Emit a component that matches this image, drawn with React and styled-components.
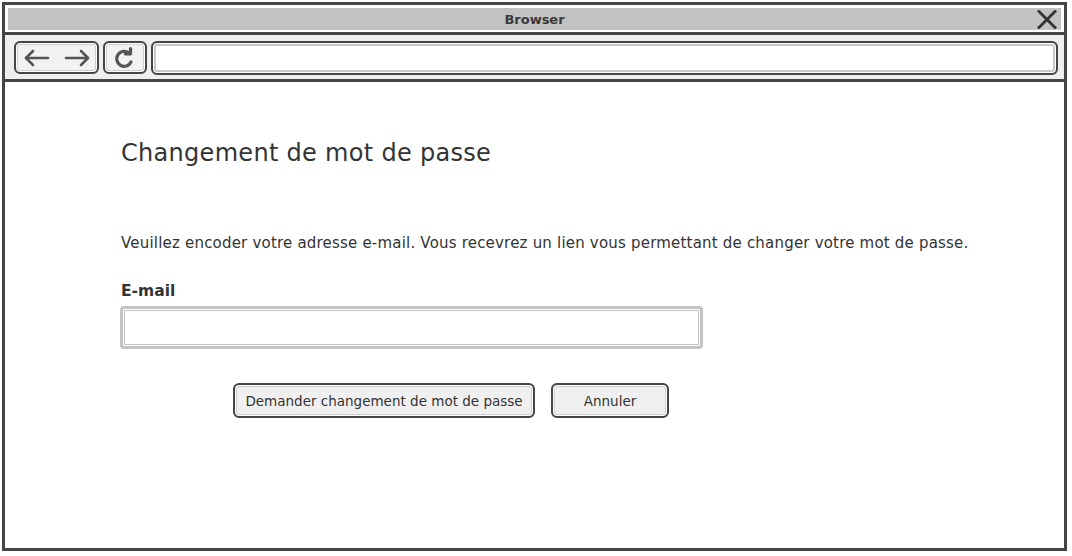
import styled, { createGlobalStyle } from "styled-components";

const GlobalStyle = createGlobalStyle`
  html, body {
    margin: 0;
    padding: 0;
    background: #ffffff;
  }
  * {
    box-sizing: border-box;
  }
`;

const FONT = `"Comic Sans MS", "DejaVu Sans", "Open Sans", sans-serif`;

const Page = styled.div`
  width: 1072px;
  height: 556px;
  padding: 2px 0 0 2px;
  font-family: ${FONT};
  color: #333;
`;

const Window = styled.div`
  width: 1065px;
  height: 549px;
  border: 3px solid #454545;
  display: flex;
  flex-direction: column;
`;

const TitleWrap = styled.div`
  padding: 3px 3px 2px 3px;
  background: #fff;
  border-bottom: 3px solid #454545;
`;

const TitleBar = styled.div`
  height: 22px;
  background: #c2c2c2;
  position: relative;
  display: flex;
  align-items: center;
  justify-content: center;
  font-size: 13px;
  font-weight: bold;
  color: #3a3a3a;
`;

const Close = styled.svg`
  position: absolute;
  right: 4px;
  top: 2px;
`;

const Toolbar = styled.div`
  height: 47px;
  background: #eeeeee;
  border-bottom: 3px solid #454545;
  display: flex;
  gap: 4px;
  padding: 6px 6px 0 9px;
`;

const NavButton = styled.div`
  width: ${(p) => p.$w}px;
  height: 33px;
  border: 2px solid #454545;
  border-radius: 6px;
  background: #f2f2f2;
  box-shadow: inset 0 0 0 1px #fff, inset 0 0 0 2px #cfcfcf;
  display: flex;
  align-items: center;
  justify-content: center;
  gap: 14px;
`;

const UrlBox = styled.div`
  flex: 1;
  height: 34px;
  border: 2px solid #454545;
  border-radius: 6px;
  background: #fff;
  box-shadow: inset 0 0 0 1px #fff, inset 0 0 0 3px #c8c8c8;
`;

const Content = styled.div`
  flex: 1;
  background: #fff;
  padding: 55px 0 0 116px;
`;

const Heading = styled.h1`
  margin: 0;
  font-size: 24px;
  font-weight: normal;
  line-height: 32px;
  letter-spacing: 0.3px;
  color: #333;
`;

const Intro = styled.p`
  margin: 64px 0 0 0;
  font-size: 15px;
  line-height: 20px;
  letter-spacing: 0.2px;
  color: #333;
`;

const Label = styled.div`
  margin-top: 28px;
  font-size: 15.5px;
  font-weight: bold;
  line-height: 20px;
  color: #333;
`;

const Input = styled.div`
  margin-top: 5px;
  margin-left: -1px;
  width: 583px;
  height: 43px;
  border: 3px solid #c4c4c4;
  border-radius: 4px;
  box-shadow: inset 0 0 0 1px #fff, inset 0 0 0 2px #c4c4c4;
  background: #fff;
`;

const Actions = styled.div`
  display: flex;
  gap: 16px;
  margin-top: 34px;
  padding-left: 112px;
`;

const Button = styled.div`
  width: ${(p) => p.$w}px;
  height: 35px;
  border: 2px solid #454545;
  border-radius: 6px;
  background: #f0f0f0;
  box-shadow: inset 0 0 0 1px #fff, inset 0 0 0 2px #d0d0d0;
  display: flex;
  align-items: center;
  justify-content: center;
  font-size: 13.5px;
  color: #333;
`;

const Arrow = ({ dir }) => (
  <svg width="26" height="18" viewBox="0 0 26 18">
    <g
      fill="none"
      stroke="#555"
      strokeWidth="2.6"
      strokeLinecap="round"
      strokeLinejoin="round"
      transform={dir === "right" ? "translate(26,0) scale(-1,1)" : undefined}
    >
      <path d="M2 9 H24" />
      <path d="M9 2 L2 9 L9 16" />
    </g>
  </svg>
);

const Reload = () => (
  <svg width="22" height="24" viewBox="0 0 22 24">
    <g fill="none" stroke="#555" strokeWidth="3.2" strokeLinecap="round" strokeLinejoin="round">
      <path d="M17 16 A7.5 7.5 0 1 1 15 7" />
      <path d="M16.5 2.5 V8 H11.5" />
    </g>
  </svg>
);

export default function App() {
  return (
    <Page>
      <GlobalStyle />
      <Window>
        <TitleWrap>
          <TitleBar>
            Browser
            <Close width="20" height="19" viewBox="0 0 20 19">
              <g stroke="#333" strokeWidth="2.8" strokeLinecap="square">
                <path d="M2 1.5 L18 17.5" />
                <path d="M18 1.5 L2 17.5" />
              </g>
            </Close>
          </TitleBar>
        </TitleWrap>
        <Toolbar>
          <NavButton $w={85}>
            <Arrow dir="left" />
            <Arrow dir="right" />
          </NavButton>
          <NavButton $w={44}>
            <Reload />
          </NavButton>
          <UrlBox />
        </Toolbar>
        <Content>
          <Heading>Changement de mot de passe</Heading>
          <Intro>
            Veuillez encoder votre adresse e-mail. Vous recevrez un lien vous
            permettant de changer votre mot de passe.
          </Intro>
          <Label>E-mail</Label>
          <Input />
          <Actions>
            <Button $w={302}>Demander changement de mot de passe</Button>
            <Button $w={118}>Annuler</Button>
          </Actions>
        </Content>
      </Window>
    </Page>
  );
}
